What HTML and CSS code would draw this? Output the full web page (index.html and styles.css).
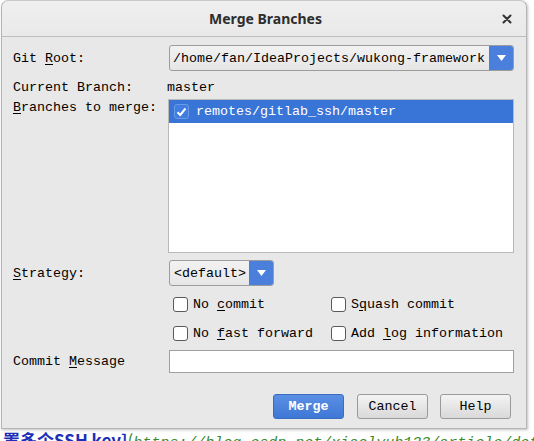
FILE: index.html
```html
<!DOCTYPE html>
<html>
<head>
<meta charset="utf-8">
<link rel="stylesheet" href="styles.css">
</head>
<body>
<div class="dialog">
  <div class="titlebar">
    <span class="title">Merge Branches</span>
    <span class="close"><svg width="10" height="10" viewBox="0 0 10 10"><path d="M1.5 1.5 L8.5 8.5 M8.5 1.5 L1.5 8.5" stroke="#333" stroke-width="2" stroke-linecap="round"/></svg></span>
  </div>
  <div class="content">
    <div class="row row-root">
      <div class="label">Git <u>R</u>oot:</div>
      <div class="combo combo-wide">
        <span class="combo-text">/home/fan/IdeaProjects/wukong-framework</span>
        <span class="combo-btn"><svg width="9" height="6" viewBox="0 0 9 6"><path d="M0 0 H9 L4.5 6 Z" fill="#fff"/></svg></span>
      </div>
    </div>
    <div class="row row-current">
      <div class="label">Current Branch:</div>
      <div class="value">master</div>
    </div>
    <div class="row row-list">
      <div class="label label-top"><u>B</u>ranches to merge:</div>
      <div class="list">
        <div class="list-item selected">
          <span class="check-sel"><svg width="11" height="10" viewBox="0 0 11 10"><path d="M1.5 5.2 L4.2 8 L9.5 1.5" stroke="#fff" stroke-width="2" fill="none"/></svg></span>
          <span>remotes/gitlab_ssh/master</span>
        </div>
      </div>
    </div>
    <div class="row row-strategy">
      <div class="label"><u>S</u>trategy:</div>
      <div class="combo combo-small">
        <span class="combo-text">&lt;default&gt;</span>
        <span class="combo-btn"><svg width="9" height="6" viewBox="0 0 9 6"><path d="M0 0 H9 L4.5 6 Z" fill="#fff"/></svg></span>
      </div>
    </div>
    <div class="row row-check row-check-first">
      <div class="label"></div>
      <div class="checks">
        <label class="check"><span class="box"></span><span>No <u>c</u>ommit</span></label>
        <label class="check"><span class="box"></span><span>S<u>q</u>uash commit</span></label>
      </div>
    </div>
    <div class="row row-check">
      <div class="label"></div>
      <div class="checks">
        <label class="check"><span class="box"></span><span>No <u>f</u>ast forward</span></label>
        <label class="check"><span class="box"></span><span>Add <u>l</u>og information</span></label>
      </div>
    </div>
    <div class="row row-msg">
      <div class="label"><span>Commit <u>M</u>essage</span></div>
      <div class="input"></div>
    </div>
    <div class="buttons">
      <button class="btn btn-primary">Merge</button>
      <button class="btn">Cancel</button>
      <button class="btn">Help</button>
    </div>
  </div>
</div>
<div class="behind"><span class="b1">置多个SSH key]</span><span class="b2">(</span><span class="b3">https://blog.csdn.net/xiaolyuh123/article/det</span></div>
</body>
</html>
```
FILE: styles.css
```css
html, body {
  margin: 0;
  padding: 0;
  background: #ffffff;
  overflow: hidden;
}
body {
  width: 534px;
  height: 441px;
  font-family: "Liberation Mono", "DejaVu Sans Mono", monospace;
  font-size: 13.33px;
  color: #000;
}
u { text-decoration: underline; text-underline-offset: 2px; }

.dialog {
  box-sizing: border-box;
  margin-left: 1px;
  width: 526px;
  height: 429px;
  background: #e8e8e8;
  border: 1px solid #b5b5b5;
  border-top-color: #c8c8c8;
  border-radius: 7px 7px 0 0;
  box-shadow: 1px 1px 3px rgba(0,0,0,0.25);
  display: flex;
  flex-direction: column;
}
.titlebar {
  height: 35px;
  border-bottom: 1px solid #bdbdbd;
  background: linear-gradient(#efefef, #e9e9e9);
  border-radius: 7px 7px 0 0;
  display: flex;
  align-items: center;
  justify-content: center;
  position: relative;
}
.title {
  font-family: "Noto Sans", "DejaVu Sans", sans-serif;
  font-weight: bold;
  font-size: 14px;
  color: #2e2e2e;
  margin-left: 3px;
}
.close {
  position: absolute;
  right: 14px;
  top: 13px;
  width: 10px;
  height: 10px;
  display: flex;
}
.content {
  padding: 8px 12px 0 11px;
  display: flex;
  flex-direction: column;
}
.row {
  display: flex;
  align-items: center;
}
.label {
  width: 156px;
  flex: none;
}
.label-top { align-self: flex-start; margin-top: 1px; }
.row-root { height: 26px; }
.row-current { height: 20px; margin-top: 6px; }
.value { margin-left: -2px; }
.row-list { margin-top: 2px; align-items: flex-start; }
.row-strategy { height: 26px; margin-top: 7px; }
.row-check { height: 29px; }
.row-check-first { margin-top: 4px; }
.row-msg { height: 23px; margin-top: 2px; }

.combo {
  box-sizing: border-box;
  height: 26px;
  border: 1px solid #9c9c9c;
  border-radius: 3px;
  background: linear-gradient(#f2f2f2, #e6e6e6);
  display: flex;
  align-items: center;
  overflow: hidden;
}
.combo-wide { width: 345px; }
.combo-small { width: 105px; }
.combo-text {
  flex: 1;
  padding-left: 3px;
  white-space: nowrap;
}
.combo-small .combo-text { padding-left: 4px; }
.combo-btn {
  width: 25px;
  align-self: stretch;
  background: #4a7fdb;
  display: flex;
  align-items: center;
  justify-content: center;
  margin: -1px -1px -1px 0;
  border-radius: 0 3px 3px 0;
}

.list {
  box-sizing: border-box;
  width: 346px;
  height: 154px;
  margin-left: -1px;
  border: 1px solid #b9b9b9;
  background: #fff;
}
.list-item {
  height: 23px;
  display: flex;
  align-items: center;
  color: #fff;
}
.list-item.selected { background: #3875d7; }
.check-sel {
  box-sizing: border-box;
  width: 15px;
  height: 15px;
  margin-left: 5px;
  margin-right: 7px;
  border: 1px solid #6b9ae6;
  border-radius: 3px;
  background: #3f7ee0;
  display: flex;
  align-items: center;
  justify-content: center;
}

.checks {
  display: flex;
  padding-left: 4px;
}
.check {
  display: flex;
  align-items: center;
  width: 158px;
  white-space: nowrap;
}
.box {
  box-sizing: border-box;
  width: 15px;
  height: 15px;
  border: 1px solid #5a5a5a;
  border-radius: 3px;
  background: #fff;
  margin-right: 5px;
  flex: none;
}

.input {
  box-sizing: border-box;
  width: 345px;
  height: 23px;
  border: 1px solid #a0a0a0;
  background: #fff;
}

.buttons {
  display: flex;
  justify-content: flex-end;
  gap: 12px;
  margin-top: 21px;
  margin-right: 3px;
}
.btn {
  box-sizing: border-box;
  width: 71px;
  height: 25px;
  font-family: "Liberation Mono", "DejaVu Sans Mono", monospace;
  font-size: 13.33px;
  color: #000;
  border: 1px solid #9a9a9a;
  border-radius: 3px;
  background: linear-gradient(#f3f3f3, #d9d9d9);
  padding: 0;
}
.btn-primary {
  background: linear-gradient(#5a8fe3, #3f77d6);
  border-color: #3a6cc2;
  color: #fff;
  font-weight: bold;
  margin-right: 1px;
}

.behind {
  white-space: nowrap;
  font-family: "Noto Sans CJK SC", "DejaVu Sans", sans-serif;
  font-size: 17px;
  line-height: 17px;
  margin-top: 2px;
  padding-left: 3px;
}
.b1 { color: #1c2fb8; font-weight: bold; }
.b2 { color: #2a8a2a; }
.b3 { color: #3a8a2a; font-style: italic; font-family: "Liberation Mono", monospace; font-size: 15px; }
```
